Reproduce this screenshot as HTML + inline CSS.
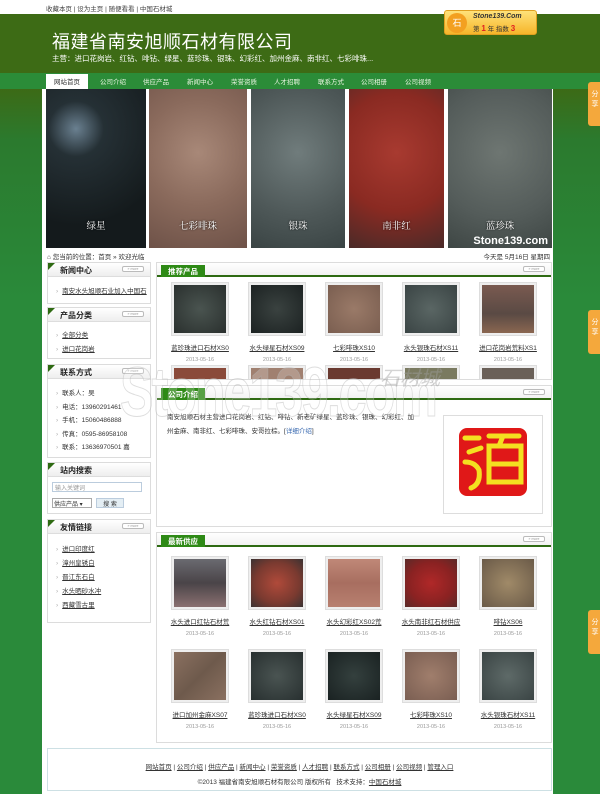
<!DOCTYPE html>
<html><head><meta charset="utf-8">
<style>
*{margin:0;padding:0;box-sizing:border-box}
body{width:600px;height:794px;overflow:hidden;position:relative;font-family:"Liberation Sans","Noto Sans CJK SC",sans-serif;font-size:7px;color:#333;background:linear-gradient(#3c6a16 0,#3c6a16 89px,#2b7a2e 140px,#2a8a3a 300px,#2a8a3a 794px)}
.a{position:absolute}
.top{left:0;top:0;width:600px;height:14px;background:#fff;}
.top span{position:absolute;left:46px;top:3px;font-size:6.5px;color:#444}
.hdr{left:0;top:14px;width:600px;height:59px;background:#3d6b15}
.title{left:52px;top:28px;font-size:18px;color:#fff;letter-spacing:.5px}
.sub{left:52px;top:53px;font-size:7.5px;color:#fff}
.badge{left:444px;top:10px;width:93px;height:25px;background:linear-gradient(#ffe27a,#f6b52a);border:1px solid #e0a020;border-radius:3px}
.nav{left:0;top:73px;width:600px;height:16px;background:#2b8c38}
.nav span{position:absolute;top:3px;font-size:6.5px;color:#e8f4e0;width:42px;text-align:center}
.nav .on{background:#fff;color:#333;top:1px;height:15px;padding-top:2px}
.main{left:42px;top:89px;width:511px;height:705px;background:#fff}
.ban{top:89px;height:159px}
.ban b{position:absolute;bottom:16px;width:100%;text-align:center;color:#fff;font-weight:normal;font-size:9.5px;font-family:"Liberation Serif","Noto Serif CJK SC",serif;text-shadow:0 0 2px #000}
.box{border:1px solid #dcdcdc;background:#fff}
.lh{position:absolute;left:0;top:0;width:100%;height:14px;background:linear-gradient(#fff,#eee);border-bottom:1px solid #ddd}
.lh b{position:absolute;left:12px;top:2px;font-size:8px;color:#222}
.lh:before{content:"";position:absolute;left:0;top:0;border-top:7px solid #2e6a12;border-right:7px solid transparent}
.more{position:absolute;right:6px;top:3px;width:22px;height:6px;border:1px solid #bbb;border-radius:2px;font-size:3.5px;color:#999;text-align:center;line-height:5px;background:#fff}
.li{position:absolute;left:8px;font-size:6.5px;color:#333}
.li:before{content:"›";color:#aaa;margin-right:4px}
.li u{color:#333}
.rh{position:absolute;left:0;top:0;width:100%;height:14px;border-bottom:2px solid #2e6a12;background:linear-gradient(#fff,#f2f2f2)}
.rh b{position:absolute;left:4px;top:2px;height:12px;width:44px;background:#2e8a16;color:#fff;font-size:7.5px;text-align:center;padding-top:1px}
.it{position:absolute;width:70px;text-align:center}
.it i{display:block;margin:0 auto;width:56px;height:52px;border:2px solid #eee;outline:1px solid #ddd}
.it u{display:block;margin-top:7px;font-size:6.5px;color:#333;white-space:nowrap;overflow:hidden}
.it s{display:block;text-decoration:none;margin-top:5px;font-size:5.5px;color:#999}
.share{left:588px;width:14px;height:44px;background:#f4a83c;border-radius:3px 0 0 3px;color:#fff;font-size:7px;text-align:center;padding-top:8px;line-height:10px}
</style></head><body>
<div class="a top"><span>收藏本页 | 设为主页 | 随便看看 | 中国石材城</span></div>
<div class="a hdr"></div>
<div class="a title">福建省南安旭顺石材有限公司</div>
<div class="a sub">主营：进口花岗岩、红钻、啡钻、绿星、蓝珍珠、银珠、幻彩红、加州金麻、南非红、七彩啡珠...</div>
<div class="a badge">
 <div class="a" style="left:2px;top:2px;width:20px;height:20px;border-radius:50%;background:#f3a020;color:#fff;font-size:9px;text-align:center;line-height:20px">石</div>
 <div class="a" style="left:28px;top:2px;font-size:7px;font-style:italic;font-weight:bold;color:#333">Stone139.Com</div>
 <div class="a" style="left:28px;top:12px;font-size:6.5px;color:#333">第 <b style="color:#e02020;font-size:8px">1</b> 年 指数 <b style="color:#e02020;font-size:8px">3</b></div>
</div>
<div class="a nav">
<span class="on" style="left:46px">网站首页</span><span style="left:92px">公司介绍</span><span style="left:135px">供应产品</span><span style="left:179px">新闻中心</span><span style="left:223px">荣誉资质</span><span style="left:266px">人才招聘</span><span style="left:310px">联系方式</span><span style="left:353px">公司相册</span><span style="left:397px">公司视频</span>
</div>
<div class="a main"></div>
<div class="a ban" style="left:46px;width:100px;background:radial-gradient(circle at 30% 25%,#6a8090 0,#253035 20%,#141a1c 70%)"><b>绿星</b></div>
<div class="a ban" style="left:149px;width:98px;background:radial-gradient(circle at 50% 40%,#a88878 0,#8a6a5c 50%,#6e5248 100%)"><b>七彩啡珠</b></div>
<div class="a ban" style="left:251px;width:94px;background:radial-gradient(circle at 50% 40%,#707c7c 0,#4e5858 60%,#3a4444 100%)"><b>银珠</b></div>
<div class="a ban" style="left:349px;width:95px;background:radial-gradient(circle at 50% 40%,#a83a30 0,#8a2a22 55%,#4a2a28 100%)"><b>南非红</b></div>
<div class="a ban" style="left:448px;width:104px;background:radial-gradient(circle at 50% 40%,#6e7672 0,#545c5a 60%,#3e4644 100%)"><b>蓝珍珠</b><span class="a" style="right:4px;bottom:1px;color:#fff;font-size:11px;font-weight:bold;font-family:'Liberation Sans',sans-serif">Stone139.com</span></div>
<div class="a" style="left:47px;top:251px;font-size:6.5px;color:#333">⌂ 您当前的位置：首页 » 欢迎光临</div>
<div class="a" style="right:50px;top:251px;font-size:6.5px;color:#333">今天是 5月16日 星期四</div>

<!-- left column -->
<div class="a box" style="left:47px;top:262px;width:104px;height:42px"><div class="lh"><b>新闻中心</b><div class="more">» more</div></div><div class="li" style="top:22px"><u>南安水头旭顺石业加入中国石</u></div></div>
<div class="a box" style="left:47px;top:307px;width:104px;height:52px"><div class="lh"><b>产品分类</b><div class="more">» more</div></div><div class="li" style="top:21px"><u>全部分类</u></div><div class="li" style="top:35px"><u>进口花岗岩</u></div></div>
<div class="a box" style="left:47px;top:364px;width:104px;height:94px"><div class="lh"><b>联系方式</b><div class="more">» more</div></div>
<div class="li" style="top:22px">联系人：吴</div><div class="li" style="top:36px">电话：13960291461</div><div class="li" style="top:49px">手机：15060486888</div><div class="li" style="top:63px">传真：0595-86958108</div><div class="li" style="top:76px">联系：13636970501 嘉</div></div>
<div class="a box" style="left:47px;top:462px;width:104px;height:52px"><div class="lh"><b>站内搜索</b></div>
<div class="a" style="left:4px;top:19px;width:90px;height:10px;border:1px solid #bcd;font-size:6px;color:#999;padding-left:2px">输入关键词</div>
<div class="a" style="left:4px;top:35px;width:40px;height:10px;border:1px solid #aaa;font-size:6px;padding-left:1px">供应产品 ▾</div>
<div class="a" style="left:48px;top:35px;width:28px;height:10px;border:1px solid #bcd;background:#e4eef4;font-size:6px;text-align:center">搜 索</div></div>
<div class="a box" style="left:47px;top:519px;width:104px;height:104px"><div class="lh"><b>友情链接</b><div class="more">» more</div></div>
<div class="li" style="top:23px"><u>进口印度红</u></div><div class="li" style="top:37px"><u>漳州皇锈白</u></div><div class="li" style="top:51px"><u>晋江东石白</u></div><div class="li" style="top:65px"><u>水头晒砂水冲</u></div><div class="li" style="top:79px"><u>西藏雪古里</u></div></div>

<!-- recommended -->
<div class="a box" style="left:156px;top:262px;width:396px;height:118px;overflow:hidden"><div class="rh"><b>推荐产品</b><div class="more">» more</div></div>
<div class="it" style="left:8px;top:20px"><i style="background:radial-gradient(#4a5450,#2a302e)"></i><u>蓝珍珠进口石材XS0</u><s>2013-05-16</s></div>
<div class="it" style="left:85px;top:20px"><i style="background:radial-gradient(#3a4240,#1c2222)"></i><u>水头绿星石材XS09</u><s>2013-05-16</s></div>
<div class="it" style="left:162px;top:20px"><i style="background:radial-gradient(#9a7a68,#7a5e50)"></i><u>七彩啡珠XS10</u><s>2013-05-16</s></div>
<div class="it" style="left:239px;top:20px"><i style="background:radial-gradient(#5a6664,#3a4444)"></i><u>水头银珠石材XS11</u><s>2013-05-16</s></div>
<div class="it" style="left:316px;top:20px"><i style="background:linear-gradient(#7a5a50,#5a4a44 60%,#8a6650)"></i><u>进口花岗岩荒料XS1</u><s>2013-05-16</s></div>
<div class="it" style="left:8px;top:103px"><i style="background:#8a4a3a"></i></div><div class="it" style="left:85px;top:103px"><i style="background:#a08070"></i></div><div class="it" style="left:162px;top:103px"><i style="background:#6a3a30"></i></div><div class="it" style="left:239px;top:103px"><i style="background:#7a7a60"></i></div><div class="it" style="left:316px;top:103px"><i style="background:#6a6058"></i></div>
</div>

<!-- company intro -->
<div class="a box" style="left:156px;top:385px;width:396px;height:142px"><div class="rh"><b>公司介绍</b><div class="more">» more</div></div>
<div class="a" style="left:10px;top:25px;width:250px;font-size:6.5px;line-height:14px;color:#333">南安旭顺石材主营进口花岗岩、红钻、啡钻、新老矿绿星、蓝珍珠、银珠、幻彩红、加州金麻、南非红、七彩啡珠、安哥拉棕。[<span style="color:#3a6ab0">详细介绍</span>]</div>
<div class="a" style="left:286px;top:29px;width:100px;height:99px;border:1px solid #ddd"></div>
</div>
<div class="a" style="left:459px;top:428px;width:68px;height:68px;background:#e01818;border-radius:8px;overflow:hidden">
<svg width="68" height="68" viewBox="0 0 68 68"><g fill="none" stroke="#f4e020" stroke-width="5" stroke-linecap="round"><path d="M6 10 L20 10 M10 24 L22 20 M6 34 Q16 34 20 42 Q22 56 12 60 M30 8 L60 8 M44 8 L40 18 M30 18 L62 18 L62 54 L30 54 Z M30 36 L62 36"/></g></svg></div>

<!-- latest supply -->
<div class="a box" style="left:156px;top:532px;width:396px;height:211px"><div class="rh"><b>最新供应</b><div class="more">» more</div></div>
<div class="it" style="left:8px;top:24px"><i style="background:linear-gradient(#6a6a70,#4a4448 50%,#8a7070)"></i><u>水头进口红钻石材荒</u><s>2013-05-16</s></div>
<div class="it" style="left:85px;top:24px"><i style="background:radial-gradient(#b04a3a,#7a3a30 60%,#3a3232)"></i><u>水头红钻石材XS01</u><s>2013-05-16</s></div>
<div class="it" style="left:162px;top:24px"><i style="background:linear-gradient(#c08878,#a86e60,#b88070)"></i><u>水头幻彩红XS02荒</u><s>2013-05-16</s></div>
<div class="it" style="left:239px;top:24px"><i style="background:radial-gradient(#b02828,#8a2222 60%,#5a2a28)"></i><u>水头南非红石材供应</u><s>2013-05-16</s></div>
<div class="it" style="left:316px;top:24px"><i style="background:radial-gradient(#a08a68,#6a5a48)"></i><u>啡钻XS06</u><s>2013-05-16</s></div>
<div class="it" style="left:8px;top:117px"><i style="background:linear-gradient(135deg,#8a7060,#6e5a4c,#8a7060)"></i><u>进口加州金麻XS07</u><s>2013-05-16</s></div>
<div class="it" style="left:85px;top:117px"><i style="background:radial-gradient(#4a5452,#283030)"></i><u>蓝珍珠进口石材XS0</u><s>2013-05-16</s></div>
<div class="it" style="left:162px;top:117px"><i style="background:radial-gradient(#34403e,#1a2222)"></i><u>水头绿星石材XS09</u><s>2013-05-16</s></div>
<div class="it" style="left:239px;top:117px"><i style="background:radial-gradient(#a07e6c,#7a5e52)"></i><u>七彩啡珠XS10</u><s>2013-05-16</s></div>
<div class="it" style="left:316px;top:117px"><i style="background:radial-gradient(#5e6a68,#3a4444)"></i><u>水头银珠石材XS11</u><s>2013-05-16</s></div>
</div>

<div class="a box" style="left:47px;top:748px;width:505px;height:43px;border-color:#cde0e4">
<div class="a" style="left:0;top:12px;width:100%;text-align:center;font-size:6.5px;color:#333"><u>网站首页</u> | <u>公司介绍</u> | <u>供应产品</u> | <u>新闻中心</u> | <u>荣誉资质</u> | <u>人才招聘</u> | <u>联系方式</u> | <u>公司相册</u> | <u>公司视频</u> | <u>管理入口</u></div>
<div class="a" style="left:0;top:27px;width:100%;text-align:center;font-size:6.5px;color:#333">©2013 福建省南安旭顺石材有限公司 版权所有 &nbsp; 技术支持：<u>中国石材城</u></div>
</div>

<div class="a" style="left:120px;top:352px;font-size:70px;font-weight:bold;color:rgba(255,255,255,0.2);-webkit-text-stroke:1px rgba(180,180,180,0.45);letter-spacing:-3px;font-family:'Liberation Sans',sans-serif;transform:scaleX(0.72);transform-origin:left top;white-space:nowrap">Stone139.com</div>
<div class="a" style="left:380px;top:362px;font-size:20px;font-style:italic;color:rgba(160,160,160,0.45)">石材城</div>

<div class="a share" style="top:82px">分<br>享</div>
<div class="a share" style="top:310px">分<br>享</div>
<div class="a share" style="top:610px">分<br>享</div>
</body></html>
